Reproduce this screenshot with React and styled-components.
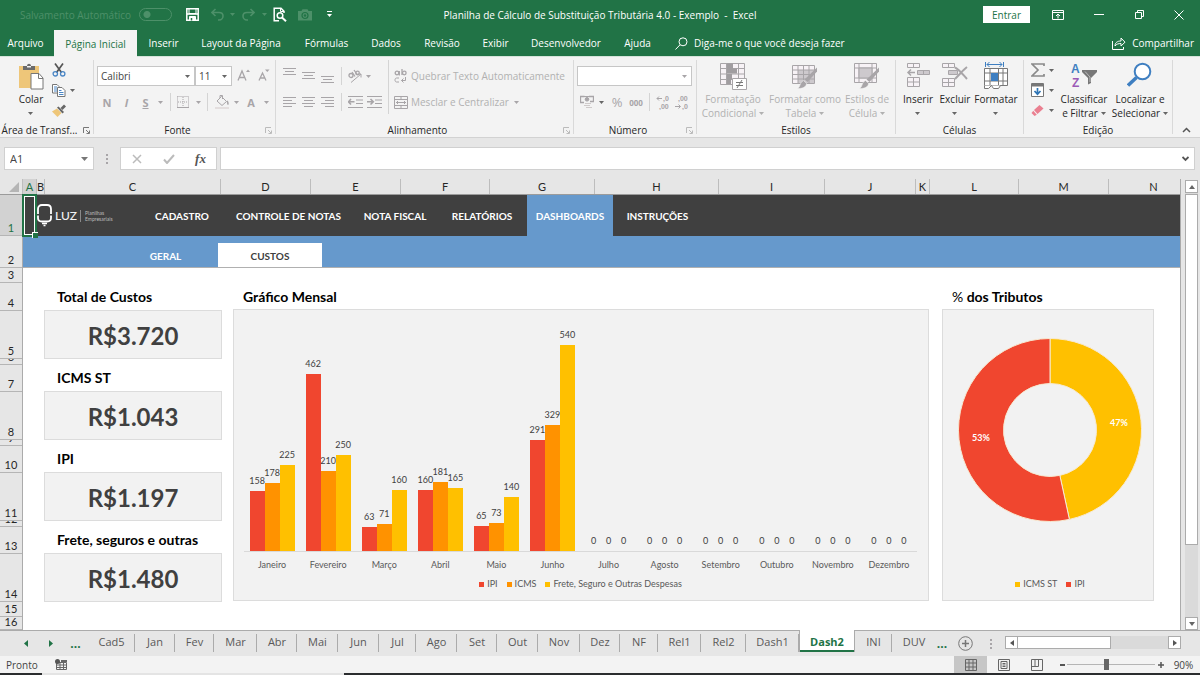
import { useState } from "react";
import styled, { createGlobalStyle, css } from "styled-components";

const GlobalStyle = createGlobalStyle`
  * {
    box-sizing: border-box;
  }
  body {
    margin: 0;
    background: #e6e6e6;
    font-family: "Open Sans", "Noto Sans", sans-serif;
    font-size: 10px;
    color: #262626;
  }
  button, input, select {
    font: inherit;
    color: inherit;
    margin: 0;
    padding: 0;
    border: 0;
    background: none;
    outline: none;
  }
  svg {
    display: block;
    flex: none;
  }
`;

const GREEN = "#217346";
const GRAY = "#a8a5a8";
const DARK = "#666";
const RED = "#f0462f";
const ORANGE = "#ff9200";
const YELLOW = "#ffc000";

const Window = styled.div`
  display: flex;
  flex-direction: column;
  min-height: 100vh;
`;

/* ---------- title bar ---------- */

const TitleBar = styled.header`
  display: grid;
  grid-template-columns: 1fr auto 1fr;
  align-items: center;
  height: 29px;
  background: ${GREEN};
  color: white;
`;

const QuickAccess = styled.div`
  display: flex;
  align-items: center;
  padding-left: 20px;
`;

const AutoSave = styled.label`
  display: flex;
  align-items: center;
  justify-content: space-between;
  width: 152px;
  margin-right: 8px;
  color: #4d9069;
  white-space: nowrap;
  >input {
    appearance: none;
    width: 33px;
    height: 13px;
    border: 1px solid #4d9069;
    border-radius: 7px;
    background: radial-gradient(circle at 7px 50%, #4d9069 3px, transparent 4px);
  }
`;

const Title = styled.div`
  font-size: 10px;
  white-space: pre;
`;

const WindowButtons = styled.div`
  display: flex;
  align-items: center;
  justify-content: flex-end;
  padding-right: 1px;
`;

const SignIn = styled.button`
  width: 47px;
  height: 17px;
  margin-right: 8px;
  background: white;
  color: ${GREEN};
`;

const Tool = styled.button`
  display: flex;
  flex: none;
  align-items: center;
  justify-content: center;
  width: ${(props) => props.$w || 19}px;
  height: 20px;
  color: ${(props) => props.$color || GRAY};
  >b {
    font-size: 11px;
  }
`;

/* ---------- ribbon tabs ---------- */

const TabRow = styled.nav`
  display: flex;
  height: 28px;
  padding-top: 1px;
  background: ${GREEN};
  border-bottom: 1px solid #d5e3da;
  color: white;
`;

const RibbonTab = styled.button`
  width: ${(props) => props.$w}px;
  white-space: nowrap;
  &:first-child {
    padding-right: 3px;
  }
  ${(props) => props.$active && css`
    background: #f3f3f3;
    color: ${GREEN};
    margin-bottom: -1px;
  `}
`;

const TabAction = styled.button`
  display: flex;
  align-items: center;
  gap: 6px;
  padding: 0 6px 0 14px;
  &:last-child {
    margin-left: auto;
  }
`;

/* ---------- ribbon ---------- */

const Ribbon = styled.div`
  display: flex;
  height: 81px;
  background: #f3f3f3;
  border-bottom: 1px solid #d2d2d2;
`;

const GroupBox = styled.section`
  display: flex;
  flex: none;
  flex-direction: column;
  width: ${(props) => props.$w}px;
  margin: 3px 0;
  border-right: 1px solid #d9d9d9;
`;

const GroupBody = styled.div`
  display: flex;
  flex: 1;
  padding-left: ${(props) => props.$pad || 0}px;
`;

const GroupFooter = styled.div`
  display: flex;
  align-items: center;
  height: 8px;
  >span {
    flex: 1;
    text-align: center;
    white-space: nowrap;
  }
`;

const ToolRows = styled.div`
  display: flex;
  flex-direction: column;
  gap: 6px;
  padding-top: 6px;
`;

const ToolColumn = styled.div`
  display: flex;
  flex-direction: column;
`;

const ToolRow = styled.div`
  display: flex;
  align-items: center;
  height: 20px;
  padding-left: ${(props) => props.$pad || 0}px;
`;

const Sep = styled.div`
  flex: none;
  width: 1px;
  height: ${(props) => props.$h || 18}px;
  margin: 0 ${(props) => props.$r}px 0 ${(props) => props.$l}px;
  background: #d4d4d4;
`;

const Combo = styled.div`
  position: relative;
  width: ${(props) => props.$w}px;
  >select {
    appearance: none;
    width: 100%;
    height: 20px;
    padding-left: 3px;
    border: 1px solid #c6c6c6;
    background: white;
    color: #444;
  }
  >svg {
    position: absolute;
    right: 5px;
    top: 9px;
    pointer-events: none;
  }
`;

const TextTool = styled.button`
  display: flex;
  align-items: center;
  gap: 3px;
  height: 20px;
  color: #b1b1b1;
  white-space: nowrap;
`;

const Percent = styled.span`
  font-size: 13px;
`;

const Thousands = styled.span`
  font-size: 8px;
  font-weight: 700;
`;

const Big = styled.button`
  display: flex;
  flex: none;
  flex-direction: column;
  align-items: center;
  justify-content: flex-start;
  gap: 2px;
  width: ${(props) => props.$w}px;
  padding-top: 2px;
  color: ${(props) => (props.$off ? "#b1b1b1" : "#262626")};
  line-height: 14px;
  white-space: nowrap;
`;

const BigLine = styled.span`
  display: flex;
  align-items: center;
  justify-content: center;
  gap: 3px;
  height: 14px;
`;

const Collapse = styled.button`
  display: flex;
  flex: 1;
  align-items: flex-end;
  justify-content: center;
  padding-bottom: 4px;
`;

/* ---------- formula bar ---------- */

const FormulaRow = styled.div`
  display: flex;
  height: 41px;
  padding: 9px 5px 9px 4px;
`;

const Field = styled.div`
  display: flex;
  align-items: center;
  width: ${(props) => props.$w}px;
  border: 1px solid #d0d0d0;
  background: white;
  ${(props) => props.$grow && "flex: 1;"}
  >input {
    flex: 1;
    min-width: 0;
    padding-left: 5px;
    font-size: 11px;
    color: #444;
  }
  >svg {
    margin-right: 5px;
  }
`;

const Dots = styled.div`
  display: flex;
  align-items: center;
  justify-content: center;
  width: ${(props) => props.$w}px;
`;

const Fx = styled.i`
  font-family: "Liberation Serif", serif;
  font-size: 13px;
  font-weight: 700;
`;

/* ---------- sheet ---------- */

const SheetArea = styled.div`
  display: flex;
  flex: 1;
`;

const Sheet = styled.div`
  display: flex;
  flex: 1;
  flex-direction: column;
  min-width: 0;
  border-right: 1px solid #ababab;
`;

const ColumnHeads = styled.div`
  display: flex;
  height: 16px;
  overflow: hidden;
  border-bottom: 1px solid #9b9b9b;
  font-family: Lato, sans-serif;
  font-size: 11px;
`;

const ColumnHead = styled.div`
  flex: none;
  width: ${(props) => props.$w}px;
  border-right: 1px solid #bdbdbd;
  line-height: 15px;
  text-align: center;
  ${(props) => props.$on && `background: #d2d2d2; color: ${GREEN};`}
`;

const Corner = styled.div`
  display: flex;
  flex: none;
  align-items: flex-end;
  justify-content: flex-end;
  width: 23px;
  padding: 0 3px 2px 0;
  border-right: 1px solid #bdbdbd;
`;

const SheetBody = styled.div`
  display: flex;
  flex: 1;
`;

const RowHeads = styled.div`
  width: 23px;
  border-right: 1px solid #ababab;
  font-family: Lato, sans-serif;
  font-size: 11px;
`;

const RowHead = styled.div`
  display: flex;
  align-items: flex-end;
  justify-content: center;
  height: ${(props) => props.$h}px;
  overflow: hidden;
  border-bottom: 1px solid #b5b5b5;
  line-height: 14px;
  ${(props) => props.$on && `background: #d2d2d2; color: ${GREEN};`}
`;

const Cells = styled.div`
  position: relative;
  flex: 1;
  min-width: 0;
  background: white;
  font-family: Lato, Carlito, sans-serif;
`;

const Selection = styled.div`
  position: absolute;
  left: -1px;
  top: -1px;
  width: 15px;
  height: 43px;
  border: 2px solid ${GREEN};
  box-shadow: inset 0 0 0 1px white;
  &::after {
    content: "";
    position: absolute;
    right: -3px;
    bottom: -3px;
    width: 5px;
    height: 5px;
    border: 1px solid white;
    border-width: 1px 0 0 1px;
    background: ${GREEN};
  }
`;

const MainNav = styled.nav`
  display: flex;
  height: 41px;
  background: #404040;
`;

const NavLink = styled.a`
  display: flex;
  align-items: center;
  justify-content: center;
  width: ${(props) => props.$w}px;
  background: ${(props) => (props.$active ? "#6699cc" : "transparent")};
  color: white;
  font-size: 10px;
  font-weight: 700;
  text-decoration: none;
  white-space: nowrap;
`;

const Logo = styled.div`
  display: flex;
  align-items: center;
  width: 117px;
  padding-left: 14px;
  color: #f2f2f2;
  >b {
    margin-left: 3px;
    font-size: 12px;
    font-weight: 500;
  }
  >small {
    margin-left: 3px;
    padding-left: 4px;
    border-left: 1px solid #8a8a8a;
    font-size: 5px;
    line-height: 6px;
    color: #bdbdbd;
  }
`;

const SubNav = styled.nav`
  display: flex;
  align-items: flex-end;
  height: 32px;
  padding-left: 90px;
  background: #6699cc;
  border-bottom: 1px solid #b0b0b0;
`;

const SubLink = styled.a`
  width: ${(props) => props.$w}px;
  height: 24px;
  background: ${(props) => (props.$active ? "white" : "transparent")};
  color: ${(props) => (props.$active ? "#404040" : "white")};
  font-size: 10px;
  font-weight: 700;
  line-height: 26px;
  text-align: center;
  text-decoration: none;
`;

const Dashboard = styled.main`
  display: flex;
  padding: 15px 26px 28px 21px;
`;

const CardColumn = styled.div`
  display: flex;
  flex-direction: column;
  gap: 5px;
  width: 178px;
  margin-right: 11px;
`;

const Heading = styled.h2`
  height: ${(props) => props.$h || 26}px;
  margin: 0;
  padding-left: ${(props) => props.$pad || 10}px;
  font-size: 14px;
  font-weight: 700;
  line-height: 28px;
  color: black;
  >span {
    font-weight: 400;
  }
`;

const Card = styled.div`
  height: 49px;
  border: 1px solid #dcdcdc;
  background: #f2f2f2;
  color: #404040;
  font-size: 24px;
  font-weight: 700;
  line-height: 49px;
  text-align: center;
`;

const ChartColumn = styled.section`
  display: flex;
  flex-direction: column;
  min-width: 0;
  margin-bottom: 1px;
  ${(props) => (props.$w ? `width: ${props.$w}px;` : "flex: 1; margin-right: 13px;")}
`;

const Panel = styled.div`
  display: flex;
  flex: 1;
  flex-direction: column;
  padding: ${(props) => props.$top || 0}px 11px 9px ${(props) => props.$left || 10}px;
  border: 1px solid #dcdcdc;
  background: #f2f2f2;
  color: #595959;
  font-size: 9px;
`;

const Plot = styled.div`
  display: grid;
  grid-template-columns: repeat(12, 1fr);
  flex: 1;
  align-items: end;
  border-bottom: 1px solid #d9d9d9;
`;

const Month = styled.div`
  display: flex;
  align-items: flex-end;
  justify-content: center;
`;

const BarSlot = styled.div`
  display: flex;
  flex-direction: column;
  align-items: center;
  width: 15px;
  color: #404040;
  line-height: 12px;
`;

const Bar = styled.div`
  width: 100%;
  margin-top: 4px;
  background: ${(props) => props.$color};
`;

const MonthNames = styled.div`
  display: grid;
  grid-template-columns: repeat(12, 1fr);
  line-height: 25px;
  text-align: center;
`;

const LegendRow = styled.div`
  display: flex;
  justify-content: center;
  gap: 9px;
  margin-top: ${(props) => props.$top || "0"};
  line-height: 14px;
`;

const LegendItem = styled.span`
  display: flex;
  align-items: center;
  gap: 3px;
  &::before {
    content: "";
    width: 5px;
    height: 5px;
    background: ${(props) => props.$color};
  }
`;

const DonutBox = styled.div`
  display: flex;
  justify-content: center;
  >svg {
    font-size: 9px;
    font-weight: 700;
  }
`;

/* ---------- scrollbars, sheet tabs, status ---------- */

const VScroll = styled.div`
  display: flex;
  flex-direction: column;
  width: 13px;
  margin: 1px 2px 0 4px;
  background: #dadada;
`;

const ScrollButton = styled.button`
  display: flex;
  flex: none;
  align-items: center;
  justify-content: center;
  width: 13px;
  height: 13px;
  border: 1px solid #ababab;
  background: white;
`;

const VThumb = styled.div`
  flex: 1;
  margin: 1px 0 72px;
  border: 1px solid #ababab;
  background: white;
`;

const SheetTabs = styled.div`
  display: flex;
  height: 26px;
  border-top: 1px solid #ababab;
`;

const TabArrow = styled.button`
  display: flex;
  align-items: center;
  justify-content: center;
  width: ${(props) => props.$w || 25}px;
  color: ${GREEN};
  font-size: 12px;
  font-weight: 700;
`;

const SheetTab = styled.button`
  position: relative;
  flex: none;
  width: ${(props) => props.$w}px;
  padding-bottom: 4px;
  font-size: 11px;
  color: #595959;
  &::after {
    content: "";
    position: absolute;
    right: 0;
    top: 3px;
    height: 18px;
    border-right: 1px solid #ababab;
  }
  ${(props) => props.$last && css`
    &::after {
      display: none;
    }
  `}
  ${(props) => props.$active && css`
    height: 22px;
    margin-top: -1px;
    padding: 0;
    background: white;
    border: solid #ababab;
    border-width: 0 1px;
    box-shadow: inset 0 -2px ${GREEN};
    color: ${GREEN};
    font-weight: 700;
    &::after {
      display: none;
    }
  `}
`;

const HScroll = styled.div`
  display: flex;
  flex: 1;
  height: 13px;
  margin: 5px 19px 0 5px;
  background: #dadada;
`;

const HThumb = styled.div`
  flex: 1;
  margin-right: 57px;
  border: 1px solid #ababab;
  border-left: 0;
  background: white;
`;

const StatusBar = styled.footer`
  display: flex;
  align-items: center;
  height: 17px;
  padding-left: 6px;
  background: #f3f3f3;
  color: #444;
  >span {
    width: 49px;
  }
`;

const Spacer = styled.div`
  flex: 1;
`;

const ViewButton = styled.button`
  display: flex;
  align-items: center;
  justify-content: center;
  width: 33px;
  height: 17px;
  background: ${(props) => (props.$active ? "#c6c6c6" : "transparent")};
`;

const ZoomBox = styled.div`
  display: flex;
  align-items: center;
  margin-left: 4px;
  >input {
    appearance: none;
    width: 88px;
    height: 12px;
    background: linear-gradient(#b5b5b5, #b5b5b5) center / 100% 1px no-repeat;
  }
  >input::-webkit-slider-thumb {
    appearance: none;
    width: 5px;
    height: 11px;
    background: #666;
  }
  >output {
    width: 33px;
    text-align: center;
  }
`;

const BottomEdge = styled.div`
  display: flex;
  height: 2px;
  background: #2b2d2f;
  &::before {
    content: "";
    width: 302px;
    margin-left: 42px;
    background: #e4e4e4;
  }
`;

/* ---------- icons ---------- */

const Caret = ({ color = DARK }) => (
  <svg width="5" height="3" viewBox="0 0 5 3"><path d="M0 0h5L2.5 3z" fill={color} /></svg>
);

const Svg = ({ w = 14, h = 14, color = GRAY, children }) => (
  <svg width={w} height={h} viewBox={`0 0 ${w} ${h}`} fill="none" stroke={color}>{children}</svg>
);

const Lines = ({ rows, h = 14 }) => (
  <svg width="13" height={h} viewBox={`0 0 13 ${h}`} fill={GRAY}>
    {rows.map(([x, y, w]) => <rect key={y} x={x} y={y} width={w} height="1" />)}
  </svg>
);

const Launcher = ({ color = "#777" }) => (
  <Tool $w={14} aria-label="Mais opções">
    <Svg w={7} h={7} color={color}><path d="M.5 6V.5H6M3 3l3 3M6.5 3.5v3h-3" /></Svg>
  </Tool>
);

const SaveIcon = () => (
  <Svg w={13} h={13} color="white">
    <path d="M.8.8h11.4v11.4H.8z" strokeWidth="1.5" />
    <path d="M3 1h7v4.5H3z" fill={GREEN} />
    <path d="M1 6h11" strokeWidth="1.6" />
    <path d="M3.5 8.5h6v4h-6z" fill="white" /><path d="M5.5 10v2.5" stroke={GREEN} strokeWidth="1.5" />
  </Svg>
);

const UndoIcon = ({ flip }) => (
  <svg width="13" height="13" viewBox="0 0 13 13" fill="none" stroke="#4d9069" strokeWidth="1.6">
    <path transform={flip ? "translate(13 0) scale(-1 1)" : undefined} d="M4.5 1L1 4.5 4.500 8M1.500 4.500H8c2.500 0 4 1.500 4 3.500s-1.500 4-4 4H7" />
  </svg>
);

const PreviewIcon = () => (
  <Svg w={14} h={15} color="white">
    <path d="M6 13.800H1.200V1.200H8l3 3V6" strokeWidth="1.500" /><path d="M7.500 1v3.500H11" />
    <circle cx="7" cy="8.500" r="2.800" strokeWidth="1.500" /><path d="M9 10.500l4 3.700" strokeWidth="2" />
  </Svg>
);

const CameraIcon = () => (
  <Svg w={14} h={12} color="none">
    <path d="M0 2h3.500l1-1.800h5l1 1.800H14v9.500H0z" fill="#4d9069" />
    <circle cx="7" cy="6.500" r="3" stroke={GREEN} strokeWidth="1.200" /><circle cx="7" cy="6.500" r="1.200" fill={GREEN} />
  </Svg>
);

const PasteIcon = () => (
  <svg width="26" height="28" viewBox="0 0 26 28">
    <path d="M1 4h20v22H1z" fill="#eec679" />
    <path d="M5 8V4h4c0-3 4-3 4 0h4v4z" fill="#6b6b6b" /><path d="M9 4h4v1.500H9z" fill="#f3f3f3" />
    <path d="M13 11.500h8l4 4.500v11H13z" fill="white" stroke="#777" /><path d="M20.500 11.500v5H25" fill="none" stroke="#777" />
  </svg>
);

const CutIcon = () => (
  <Svg w={14} h={14} color="#555">
    <path d="M3 .5l6.500 9M11 .5L4.500 9.500" strokeWidth="1.700" />
    <circle cx="3.300" cy="10.800" r="2.200" stroke="#4a86c5" strokeWidth="1.300" /><circle cx="10.700" cy="10.800" r="2.200" stroke="#4a86c5" strokeWidth="1.300" />
  </Svg>
);

const CopyIcon = () => (
  <Svg w={14} h={13} color="#777">
    <path d="M.5.5H5l2 2V9H.5z" fill="white" /><path d="M2 3h3M2 5h3M2 7h3" stroke="#4a86c5" />
    <path d="M5.500 3.500H10l3 3v6H5.500z" fill="white" /><path d="M7 6.500h2.500M7 8.500h4.500M7 10.500h4.500" stroke="#4a86c5" />
  </Svg>
);

const PainterIcon = () => (
  <Svg w={14} h={13} color="none">
    <path d="M0 7.500l5-3 4.500 4.500-4 4z" fill="#eec679" />
    <path d="M5 3.500l1.500-1 5.500 5.500-1.500 1.500z" fill="#666" /><path d="M8.500 4L12 .5l2 2L10.500 6z" fill="#666" />
  </Svg>
);

const BordersIcon = () => (
  <Svg w={12} h={12}>
    <path d="M.5.5h11v11M.5.5v11M6 1v10M1 6h10" strokeDasharray="1 1" /><path d="M0 11.500h12" />
  </Svg>
);

const FillIcon = () => (
  <Svg w={14} h={14}>
    <path d="M6.500 1.500l5 5-4.500 4L2 6z" /><path d="M5 3V.5h2.500V4" /><path d="M12 6c1 1.500 1.500 2.500.5 3.500" strokeWidth="1.500" />
    <path d="M0 12h14v2H0z" fill="#e3dede" stroke="none" />
  </Svg>
);

const OrientationIcon = () => (
  <svg width="15" height="15" viewBox="0 0 15 15" fill="none" stroke={GRAY}>
    <circle cx="3" cy="6.500" r="2" strokeWidth="1.300" /><path d="M4 3l3 4.500M6 1l3.500 5" strokeWidth="1.300" /><circle cx="9.500" cy="4" r="1.800" strokeWidth="1.300" />
    <path d="M3 13.500L13 5M13 8.500V5H9.500" />
  </svg>
);

const IndentIcon = ({ right }) => (
  <Svg w={15} h={12}>
    <path d="M0 .5h15M8 4h7M8 7.500h7M0 11.500h15" />
    <path d={right ? "M0 5.800h6M3.500 3L6.300 5.800 3.500 8.500" : "M6.500 5.800h-6M3 3L.5 5.800 3 8.500"} strokeWidth="1.600" />
  </Svg>
);

const WrapIcon = () => (
  <Svg w={14} h={14}>
    <circle cx="3" cy="4" r="1.800" strokeWidth="1.300" /><path d="M5.300 2v4.500M8 0v6" strokeWidth="1.300" /><circle cx="10.300" cy="4" r="1.800" strokeWidth="1.300" />
    <path d="M5 9H2.500c-2 0-2 4 0 4H5M11.500 8v3.500H7.500M9.500 9.500l-2 2 2 2" />
  </Svg>
);

const MergeIcon = () => (
  <Svg w={14} h={13}>
    <path d="M.5.5h13v12H.5zM.5 3.500h13M.5 9.500h13M7 .5v3M7 9.500v3M2 6.500h10M4 5L2.500 6.500 4 8M10 5l1.500 1.500L10 8" />
  </Svg>
);

const MoneyIcon = () => (
  <Svg w={14} h={14}>
    <path d="M4 7.500H.5v-6h4M9 1.500h4.500v5H10" strokeWidth="1.300" /><path d="M3 1.500h8" /><circle cx="7" cy="4.300" r="1.800" fill={GRAY} />
    <path d="M5 8.500h6M4 10.500h6M6 12.500h6" stroke="#cfcaca" />
  </Svg>
);

const DecimalIcon = ({ less }) => (
  <svg width="14" height="15" viewBox="0 0 14 15" fill={GRAY} fontFamily="Liberation Sans, sans-serif" fontSize="7" fontWeight="700">
    <text x={less ? 3 : 7} y="6">{less ? ",00" : ",0"}</text>
    <text x={less ? 7 : 3} y="14">{less ? ",0" : ",00"}</text>
    <path d={less ? "M0 11.500h5M3.500 9.500l2 2-2 2" : "M6 3.500H1M3 1.500l-2 2 2 2"} fill="none" stroke={GRAY} />
  </svg>
);

const Brush = () => (
  <g stroke="none" fill={GRAY}>
    <path d="M26 5.500v4L16.500 20l-3-2.500z" />
    <path d="M12.500 18.500l3 2.800c0 3.500-3.500 5.500-9 5.200 3-1.500 2-6 6-8z" stroke="#f3f3f3" strokeWidth=".6" />
  </g>
);

const CondIcon = () => (
  <Svg w={28} h={28}>
    <path d="M1.500 1.500h24v21h-24zM1.500 6.500h24M1.500 12h24M1.500 17.500h24M7.500 1.500v21M19.500 1.500v21" fill="#f7f2f6" />
    <path d="M8 1.500h6v5H8zM8 6.500h10v5H8zM8 12h5v5H8zM8 17h4v5H8z" fill="#a09da0" stroke="none" />
    <path d="M13.500 16.500h14v11h-14z" fill="white" /><path d="M17 20.500h7M17 23.500h7M23 18l-5 8" stroke="#777" />
  </Svg>
);

const TableIcon = () => (
  <Svg w={28} h={28}>
    <path d="M1.500 3.500h22v18h-22z" fill="#f7f2f6" /><path d="M7 8h16v13H7z" fill="#cdc9cd" stroke="none" />
    <path d="M1.500 8h22M1.500 12.500h22M1.500 17h22M7 3.500v18M12.500 3.500v18M18 3.500v18" /><Brush />
  </Svg>
);

const StylesIcon = () => (
  <Svg w={28} h={28}>
    <path d="M1.500 1.500h22v19h-22zM1.500 6h22M1.500 16h22M6 1.500v19M19 1.500v19" fill="#f7f2f6" />
    <path d="M6 6h13v10H6z" fill="#cdc9cd" /><Brush />
  </Svg>
);

const InsertIcon = () => (
  <Svg w={26} h={28}>
    <path d="M2.500 1.500h12v4h-12zM8.500 1.500v4M2.500 15.500h12v9h-12zM2.500 20h12M8.500 15.500v9" fill="#f7f2f6" />
    <path d="M12.500 8.500h12v4h-12zM18.500 8.500v4" fill="#cdc9cd" /><path d="M10 10.500H3M6 7.500l-3 3 3 3" strokeWidth="1.500" />
  </Svg>
);

const DeleteIcon = () => (
  <Svg w={28} h={28}>
    <path d="M1.500 1.500h12v4h-12zM7.500 1.500v4M1.500 16.500h12v8h-12zM1.500 20.500h12M7.500 16.500v8" fill="#f7f2f6" />
    <path d="M7.500 8.500h9v4h-9z" fill="#cdc9cd" /><path d="M14 5.500c4 2 7 6 12 11.500M26 5c-4 3-7 7-12 12" strokeWidth="2" />
  </Svg>
);

const FormatIcon = () => (
  <Svg w={26} h={28} color="#777">
    <path d="M2.500 0v5M20.500 0v5M4 2.500h15M6.500 0L4 2.500 6.500 5M16.500 0L19 2.500 16.500 5" stroke="#3f7fc1" />
    <path d="M1.500 6.500h23v17h-23zM1.500 11h23M1.500 19h23M7 6.500v17M15.500 6.500v17M20 6.500v17" fill="white" />
    <path d="M8 11h7v8H8z" fill="#3f7fc1" stroke="none" />
    <path d="M1.500 23.500v3h4l3-3 2 3h5l2-3" fill="white" />
  </Svg>
);

const SigmaIcon = () => (
  <Svg w={14} h={14} color="#8a8a8a"><path d="M13 3V1H1l6 6-6 6h12v-2" strokeWidth="1.700" /></Svg>
);

const FillDownIcon = () => (
  <Svg w={13} h={14} color="#777">
    <path d="M.5.5h12v13H.5z" fill="white" /><path d="M1 2h11" strokeWidth="3" />
    <path d="M6.500 5v6M3.500 8l3 3.200 3-3.200" stroke="#2f75b5" strokeWidth="1.700" />
  </Svg>
);

const EraserIcon = () => (
  <Svg w={13} h={13} color="none">
    <path d="M8.500 1L12.500 4.500 6.500 10 3 6z" fill="#ea7f90" /><path d="M2.300 6.700l3.500 4L3.500 12 .5 9z" fill="#ea7f90" />
  </Svg>
);

const SortIcon = () => (
  <svg width="28" height="28" viewBox="0 0 28 28" fontFamily="Liberation Sans, sans-serif" fontSize="12" fontWeight="700">
    <text x="1" y="11" fill="#3f7fc1">A</text>
    <text x="2" y="25" fill="#9b59b6">Z</text>
    <path d="M12 8h15v2l-6 6v5l-3 1.500V16l-6-6z" fill="#777" /><path d="M15 9.500l5 5.500v5" fill="none" stroke="#bbb" />
  </svg>
);

const FindIcon = () => (
  <Svg w={26} h={28} color="#3f7fc1">
    <circle cx="15.500" cy="9.500" r="7.800" fill="white" strokeWidth="2" /><path d="M9.500 15.500L1 23.500" strokeWidth="3.500" />
  </Svg>
);

const BulbIcon = () => (
  <Svg w={15} h={23} color="white">
    <path d="M1 10V5c0-2.500 1.500-4 4-4h5c2.500 0 4 1.500 4 4v5M1 11.500V14c0 2 1.500 3.500 4 3.500h5c2.500 0 4-1.500 4-3.500v-2.500" strokeWidth="1.800" />
    <path d="M5 19.500h5M6.500 21.500h2" strokeWidth="1.500" />
  </Svg>
);

/* ---------- data ---------- */

const ribbonTabs = [
  ["Arquivo", 54], ["Página Inicial", 83], ["Inserir", 53], ["Layout da Página", 102],
  ["Fórmulas", 69], ["Dados", 50], ["Revisão", 62], ["Exibir", 45],
  ["Desenvolvedor", 96], ["Ajuda", 47],
];

const columns = [
  ["A", 14], ["B", 8], ["C", 176], ["D", 90], ["E", 90], ["F", 89], ["G", 105], ["H", 124],
  ["I", 106], ["J", 91], ["K", 14], ["L", 89], ["M", 90], ["N", 90],
];

const rowHeights = [41, 32, 15, 28, 48, 6, 27, 48, 6, 27, 48, 6, 27, 48, 15, 13];

const navItems = [
  ["CADASTRO", 84], ["CONTROLE DE NOTAS", 129], ["NOTA FISCAL", 84],
  ["RELATÓRIOS", 90], ["DASHBOARDS", 86], ["INSTRUÇÕES", 89],
];

const cards = [
  ["Total de Custos", "R$3.720"],
  ["ICMS ST", "R$1.043"],
  ["IPI", "R$1.197"],
  ["Frete, seguros e outras", "R$1.480"],
];

const months = [
  ["Janeiro", [158, 178, 225]],
  ["Fevereiro", [462, 210, 250]],
  ["Março", [63, 71, 160]],
  ["Abril", [160, 181, 165]],
  ["Maio", [65, 73, 140]],
  ["Junho", [291, 329, 540]],
  ["Julho", [0, 0, 0]],
  ["Agosto", [0, 0, 0]],
  ["Setembro", [0, 0, 0]],
  ["Outubro", [0, 0, 0]],
  ["Novembro", [0, 0, 0]],
  ["Dezembro", [0, 0, 0]],
];

const series = [["IPI", RED], ["ICMS", ORANGE], ["Frete, Seguro e Outras Despesas", YELLOW]];

const sheetTabs = [
  ["Cad5", 47], ["Jan", 40], ["Fev", 39], ["Mar", 43], ["Abr", 40], ["Mai", 41], ["Jun", 41],
  ["Jul", 37], ["Ago", 41], ["Set", 40], ["Out", 41], ["Nov", 42], ["Dez", 40], ["NF", 38],
  ["Rel1", 43], ["Rel2", 45], ["Dash1", 53], ["Dash2", 56], ["INI", 37], ["DUV", 44],
];

/* ---------- parts ---------- */

const Group = ({ w, pad, label, launcher, children }) => (
  <GroupBox $w={w}>
    <GroupBody $pad={pad}>{children}</GroupBody>
    <GroupFooter>
      <span>{label}</span>
      {launcher && <Launcher color={launcher} />}
    </GroupFooter>
  </GroupBox>
);

const BigButton = ({ w, icon, lines, off }) => (
  <Big $w={w} $off={off}>
    {icon}
    <span>
      <BigLine>{lines[0]}</BigLine>
      <BigLine>{lines[1]}<Caret color={off ? "#b1b1b1" : DARK} /></BigLine>
    </span>
  </Big>
);

const RibbonBar = () => (
  <Ribbon>
    <Group w={94} pad={12} label="Área de Transf..." launcher="#777">
      <BigButton w={38} icon={<PasteIcon />} lines={["Colar", ""]} />
      <ToolColumn>
        <Tool $w={18} aria-label="Recortar"><CutIcon /></Tool>
        <ToolRow>
          <Tool $w={18} aria-label="Copiar"><CopyIcon /></Tool>
          <Tool $w={9} aria-label="Opções de cópia"><Caret /></Tool>
        </ToolRow>
        <Tool $w={18} aria-label="Pincel"><PainterIcon /></Tool>
      </ToolColumn>
    </Group>

    <Group w={182} pad={3} label="Fonte" launcher="#bbb">
      <ToolRows>
        <ToolRow>
          <Combo $w={98}>
            <select aria-label="Fonte"><option>Calibri</option></select>
            <Caret />
          </Combo>
          <Combo $w={37}>
            <select aria-label="Tamanho"><option>11</option></select>
            <Caret />
          </Combo>
          <Tool $w={22} aria-label="Aumentar fonte">
            <Svg w={13} h={14}><path d="M1 11.500L5 2l4 9.500M2.500 8.500h5" strokeWidth="1.300" /><path d="M9 3l2-2.500L13 3z" fill={GRAY} stroke="none" /></Svg>
          </Tool>
          <Tool $w={20} aria-label="Diminuir fonte">
            <Svg w={12} h={14}><path d="M1 11.500L4.500 4 8 11.500M2 9h5" strokeWidth="1.300" /><path d="M7 .5h4.500L9.300 3z" fill={GRAY} stroke="none" /></Svg>
          </Tool>
        </ToolRow>
        <ToolRow>
          <Tool $w={20} aria-label="Negrito"><b>N</b></Tool>
          <Tool aria-label="Itálico"><b><i>I</i></b></Tool>
          <Tool aria-label="Sublinhado"><b><u>S</u></b></Tool>
          <Tool $w={10} aria-label="Opções de sublinhado"><Caret color={GRAY} /></Tool>
          <Sep $l={5} $r={5} />
          <Tool $w={14} aria-label="Bordas"><BordersIcon /></Tool>
          <Tool $w={16} aria-label="Opções de bordas"><Caret color={GRAY} /></Tool>
          <Sep $l={1} $r={6} />
          <Tool $w={15} aria-label="Cor de preenchimento"><FillIcon /></Tool>
          <Tool $w={14} aria-label="Opções de preenchimento"><Caret color={GRAY} /></Tool>
          <Tool $w={16} aria-label="Cor da fonte"><b>A</b></Tool>
          <Tool $w={14} aria-label="Opções de cor"><Caret color={GRAY} /></Tool>
        </ToolRow>
      </ToolRows>
    </Group>

    <Group w={298} pad={4} label="Alinhamento" launcher="#bbb">
      <ToolRows>
        <ToolRow>
          <Tool aria-label="Alinhar em cima"><Lines h={16} rows={[[0, 0, 13], [2, 3, 9], [0, 6, 13]]} /></Tool>
          <Tool aria-label="Alinhar no meio"><Lines h={16} rows={[[0, 4, 13], [2, 7, 9], [0, 10, 13]]} /></Tool>
          <Tool aria-label="Alinhar embaixo"><Lines h={16} rows={[[0, 8, 13], [2, 11, 9], [0, 14, 13]]} /></Tool>
          <Sep $l={4} $r={5} />
          <Tool $w={16} aria-label="Orientação"><OrientationIcon /></Tool>
          <Tool $w={10} aria-label="Opções de orientação"><Caret color={GRAY} /></Tool>
        </ToolRow>
        <ToolRow>
          <Tool aria-label="Alinhar à esquerda"><Lines h={12} rows={[[0, 1, 13], [0, 4, 9], [0, 7, 13], [0, 10, 9]]} /></Tool>
          <Tool aria-label="Centralizar"><Lines h={12} rows={[[0, 1, 13], [2, 4, 9], [0, 7, 13], [2, 10, 9]]} /></Tool>
          <Tool aria-label="Alinhar à direita"><Lines h={12} rows={[[0, 1, 13], [4, 4, 9], [0, 7, 13], [4, 10, 9]]} /></Tool>
          <Sep $l={4} $r={4} />
          <Tool aria-label="Diminuir recuo"><IndentIcon /></Tool>
          <Tool aria-label="Aumentar recuo"><IndentIcon right /></Tool>
        </ToolRow>
      </ToolRows>
      <Sep $h={54} $l={4} $r={5} />
      <ToolRows>
        <TextTool><WrapIcon />Quebrar Texto Automaticamente</TextTool>
        <TextTool><MergeIcon />Mesclar e Centralizar&nbsp; <Caret color={GRAY} /></TextTool>
      </ToolRows>
    </Group>

    <Group w={123} pad={3} label="Número" launcher="#bbb">
      <ToolRows>
        <Combo $w={115}>
          <select aria-label="Formato de número"><option></option></select>
          <Caret color={GRAY} />
        </Combo>
        <ToolRow $pad={2}>
          <Tool $w={16} aria-label="Formato contábil"><MoneyIcon /></Tool>
          <Tool $w={12} aria-label="Opções de moeda"><Caret /></Tool>
          <Tool $w={20} aria-label="Porcentagem"><Percent>%</Percent></Tool>
          <Tool $w={18} aria-label="Separador de milhares"><Thousands>000</Thousands></Tool>
          <Sep $l={4} $r={5} />
          <Tool $w={16} aria-label="Aumentar casas decimais"><DecimalIcon /></Tool>
          <Tool $w={22} aria-label="Diminuir casas decimais"><DecimalIcon less /></Tool>
        </ToolRow>
      </ToolRows>
    </Group>

    <Group w={199} label="Estilos">
      <BigButton off w={72} icon={<CondIcon />} lines={["Formatação", "Condicional"]} />
      <BigButton off w={72} icon={<TableIcon />} lines={["Formatar como", "Tabela"]} />
      <BigButton off w={52} icon={<StylesIcon />} lines={["Estilos de", "Célula"]} />
    </Group>

    <Group w={128} pad={3} label="Células">
      <BigButton w={38} icon={<InsertIcon />} lines={["Inserir", ""]} />
      <BigButton w={36} icon={<DeleteIcon />} lines={["Excluir", ""]} />
      <BigButton w={46} icon={<FormatIcon />} lines={["Formatar", ""]} />
    </Group>

    <Group w={149} pad={4} label="Edição">
      <ToolColumn>
        {[["Soma", <SigmaIcon />], ["Preencher", <FillDownIcon />], ["Limpar", <EraserIcon />]].map(([name, icon]) => (
          <ToolRow key={name}>
            <Tool aria-label={name}>{icon}</Tool>
            <Tool $w={8} aria-label={`Opções de ${name}`}><Caret /></Tool>
          </ToolRow>
        ))}
      </ToolColumn>
      <BigButton w={58} icon={<SortIcon />} lines={["Classificar", "e Filtrar"]} />
      <BigButton w={54} icon={<FindIcon />} lines={["Localizar e", "Selecionar"]} />
    </Group>

    <Collapse aria-label="Recolher a faixa">
      <Svg w={9} h={6} color="#555"><path d="M1 5l3.500-3.500L8 5" strokeWidth="1.500" /></Svg>
    </Collapse>
  </Ribbon>
);

const MonthlyChart = () => (
  <Panel>
    <Plot>
      {months.map(([name, values]) => (
        <Month key={name}>
          {values.map((value, i) => (
            <BarSlot key={series[i][0]}>
              {value}
              <Bar $color={series[i][1]} style={{ height: Math.round(value * 0.3824) }} />
            </BarSlot>
          ))}
        </Month>
      ))}
    </Plot>
    <MonthNames>
      {months.map(([name]) => <span key={name}>{name}</span>)}
    </MonthNames>
    <LegendRow>
      {series.map(([name, color]) => <LegendItem key={name} $color={color}>{name}</LegendItem>)}
    </LegendRow>
  </Panel>
);

const Donut = () => {
  const angle = 0.466 * 2 * Math.PI;
  const point = (r) => `${92 + r * Math.sin(angle)} ${92 - r * Math.cos(angle)}`;
  return (
    <DonutBox>
      <svg width="184" height="184" viewBox="0 0 184 184" stroke="#f7ead2">
        <path fill={YELLOW} d={`M92 .5A91.5 91.5 0 0 1 ${point(91.5)}L${point(46.5)}A46.5 46.5 0 0 0 92 45.5z`} />
        <path fill={RED} d={`M92 .5A91.5 91.5 0 1 0 ${point(91.5)}L${point(46.5)}A46.5 46.5 0 1 1 92 45.5z`} />
        <g fill="white" stroke="none" textAnchor="middle">
          <text x="161" y="88">47%</text>
          <text x="23" y="103">53%</text>
        </g>
      </svg>
    </DonutBox>
  );
};

const App = () => {
  const [sheet, setSheet] = useState("Dash2");
  const [zoom, setZoom] = useState(90);

  return (
    <Window>
      <GlobalStyle />
      <TitleBar>
        <QuickAccess>
          <AutoSave>Salvamento Automático<input type="checkbox" /></AutoSave>
          <Tool $w={25} aria-label="Salvar"><SaveIcon /></Tool>
          <Tool $w={25} aria-label="Desfazer"><UndoIcon /></Tool>
          <Tool $w={5} aria-label="Opções de desfazer"><Caret color="#4d9069" /></Tool>
          <Tool $w={27} aria-label="Refazer"><UndoIcon flip /></Tool>
          <Tool $w={5} aria-label="Opções de refazer"><Caret color="#4d9069" /></Tool>
          <Tool $w={25} aria-label="Visualizar"><PreviewIcon /></Tool>
          <Tool $w={25} aria-label="Câmera"><CameraIcon /></Tool>
          <Tool $w={25} aria-label="Personalizar">
            <Svg w={7} h={7} color="white"><path d="M1 .5h5" /><path d="M1 3h5L3.500 6z" fill="white" stroke="none" /></Svg>
          </Tool>
        </QuickAccess>
        <Title>Planilha de Cálculo de Substituição Tributária 4.0 - Exemplo  -  Excel</Title>
        <WindowButtons>
          <SignIn>Entrar</SignIn>
          <Tool $w={40} aria-label="Opções da faixa">
            <Svg w={12} h={10} color="white"><path d="M.5.5h11v9H.5zM.5 2.500h11M6 8.500V4M4 6l2-2 2 2" /></Svg>
          </Tool>
          <Tool $w={41} aria-label="Minimizar"><Svg w={10} h={1} color="white"><path d="M0 .5h10" /></Svg></Tool>
          <Tool $w={40} aria-label="Restaurar">
            <Svg w={9} h={9} color="white"><path d="M.5 2.500h6v6h-6zM2.500 2.500v-2h6v6h-2" /></Svg>
          </Tool>
          <Tool $w={40} aria-label="Fechar"><Svg w={10} h={10} color="white"><path d="M.5.5l9 9M9.500.5l-9 9" /></Svg></Tool>
        </WindowButtons>
      </TitleBar>

      <TabRow>
        {ribbonTabs.map(([name, w]) => (
          <RibbonTab key={name} $w={w} $active={name === "Página Inicial"}>{name}</RibbonTab>
        ))}
        <TabAction>
          <Svg w={13} h={13} color="white"><circle cx="8" cy="4.800" r="4" /><path d="M5 7.800L.5 12.500" /></Svg>
          Diga-me o que você deseja fazer
        </TabAction>
        <TabAction>
          <Svg w={14} h={13} color="white"><path d="M.5 4v8.500h11V10M3 9c0-3.500 2.500-5 6-5V1l4 4.200L9 9V6.500C6.500 6.500 4.500 7 3 9z" /></Svg>
          Compartilhar
        </TabAction>
      </TabRow>

      <RibbonBar />

      <FormulaRow>
        <Field $w={90}>
          <input aria-label="Caixa de nome" defaultValue="A1" />
          <Svg w={7} h={4} color="none"><path d="M0 0h7L3.500 4z" fill="#777" /></Svg>
        </Field>
        <Dots $w={26}><Svg w={2} h={10}><path d="M1 0v10" strokeWidth="2" strokeDasharray="2 2" /></Svg></Dots>
        <Field $w={97}>
          <Tool $w={32} aria-label="Cancelar"><Svg w={10} h={10} color="#bbb"><path d="M1 1l8 8M9 1L1 9" strokeWidth="1.500" /></Svg></Tool>
          <Tool $w={32} aria-label="Inserir valor"><Svg w={12} h={10} color="#bbb"><path d="M1 5.500L4 9l7-8" strokeWidth="2" /></Svg></Tool>
          <Tool $w={31} $color="#555" aria-label="Inserir função"><Fx>fx</Fx></Tool>
        </Field>
        <Dots $w={3} />
        <Field $grow>
          <input aria-label="Barra de fórmulas" />
          <Svg w={7} h={6} color="#555"><path d="M.5 1l3 3 3-3" strokeWidth="1.800" /></Svg>
        </Field>
      </FormulaRow>

      <SheetArea>
        <Sheet>
          <ColumnHeads>
            <Corner><Svg w={10} h={10} color="none"><path d="M10 0v10H0z" fill="#b5b5b5" /></Svg></Corner>
            {columns.map(([name, w]) => <ColumnHead key={name} $w={w} $on={name === "A"}>{name}</ColumnHead>)}
          </ColumnHeads>
          <SheetBody>
            <RowHeads>
              {rowHeights.map((h, i) => <RowHead key={i} $h={h} $on={i === 0}>{i + 1}</RowHead>)}
            </RowHeads>
            <Cells>
              <MainNav>
                <Logo>
                  <BulbIcon />
                  <b>LUZ</b>
                  <small>Planilhas<br />Empresariais</small>
                </Logo>
                {navItems.map(([name, w]) => (
                  <NavLink key={name} href="#" $w={w} $active={name === "DASHBOARDS"}>{name}</NavLink>
                ))}
              </MainNav>
              <SubNav>
                <SubLink href="#" $w={105}>GERAL</SubLink>
                <SubLink href="#" $w={104} $active>CUSTOS</SubLink>
              </SubNav>
              <Selection />
              <Dashboard>
                <CardColumn>
                  {cards.map(([name, value]) => (
                    <section key={name}>
                      <Heading $h={27} $pad={13}>{name}</Heading>
                      <Card>{value}</Card>
                    </section>
                  ))}
                </CardColumn>
                <ChartColumn>
                  <Heading>Gráfico Mensal</Heading>
                  <MonthlyChart />
                </ChartColumn>
                <ChartColumn $w={212}>
                  <Heading><span>%</span> dos Tributos</Heading>
                  <Panel $top={28} $left={15}>
                    <Donut />
                    <LegendRow $top="auto">
                      <LegendItem $color={YELLOW}>ICMS ST</LegendItem>
                      <LegendItem $color={RED}>IPI</LegendItem>
                    </LegendRow>
                  </Panel>
                </ChartColumn>
              </Dashboard>
            </Cells>
          </SheetBody>
        </Sheet>
        <VScroll>
          <ScrollButton aria-label="Rolar para cima"><Svg w={6} h={4} color="none"><path d="M0 4h6L3 0z" fill="#666" /></Svg></ScrollButton>
          <VThumb />
          <ScrollButton aria-label="Rolar para baixo"><Svg w={6} h={4} color="none"><path d="M0 0h6L3 4z" fill="#666" /></Svg></ScrollButton>
        </VScroll>
      </SheetArea>

      <SheetTabs>
        <Dots $w={13} />
        <TabArrow aria-label="Guia anterior"><Svg w={4} h={7} color="none"><path d="M4 0v7L0 3.500z" fill={GREEN} /></Svg></TabArrow>
        <TabArrow aria-label="Próxima guia"><Svg w={4} h={7} color="none"><path d="M0 0v7l4-3.500z" fill={GREEN} /></Svg></TabArrow>
        <TabArrow>...</TabArrow>
        {sheetTabs.map(([name, w]) => (
          <SheetTab
            key={name}
            $w={w}
            $active={name === sheet}
            $last={name === "DUV"}
            onClick={() => setSheet(name)}
          >
            {name}
          </SheetTab>
        ))}
        <TabArrow $w={12}>...</TabArrow>
        <TabArrow $w={34} aria-label="Nova planilha">
          <Svg w={15} h={15} color="#777"><circle cx="7.500" cy="7.500" r="6.800" /><path d="M7.500 4v7M4 7.500h7" strokeWidth="1.500" /></Svg>
        </TabArrow>
        <Dots $w={18}><Svg w={2} h={10}><path d="M1 0v10" strokeWidth="2" strokeDasharray="2 2" /></Svg></Dots>
        <HScroll>
          <ScrollButton aria-label="Rolar para a esquerda"><Svg w={4} h={6} color="none"><path d="M4 0v6L0 3z" fill="#555" /></Svg></ScrollButton>
          <HThumb />
          <ScrollButton aria-label="Rolar para a direita"><Svg w={4} h={6} color="none"><path d="M0 0v6l4-3z" fill="#555" /></Svg></ScrollButton>
        </HScroll>
      </SheetTabs>

      <StatusBar>
        <span>Pronto</span>
        <Svg w={12} h={11} color="#666">
          <path d="M1.500 3.500h10v7h-10zM1.500 6h10M1.500 8.500h10M5 3.500v7M8.500 3.500v7" /><path d="M6 2h6" strokeWidth="2" /><circle cx="2.500" cy="2.500" r="2.500" fill="#555" stroke="none" />
        </Svg>
        <Spacer />
        <ViewButton $active aria-label="Normal">
          <Svg w={12} h={12} color="#666"><path d="M.5.5h11v11H.5zM4 .5v11M8 .5v11M.5 4h11M.5 8h11" /></Svg>
        </ViewButton>
        <ViewButton aria-label="Layout da página">
          <Svg w={12} h={12} color="#666"><path d="M.5.5h11v11H.5zM3 2.500h6v7H3zM4.500 4.500h3M4.500 6h3M4.500 7.500h3" /></Svg>
        </ViewButton>
        <ViewButton aria-label="Quebra de página">
          <Svg w={12} h={12} color="#666"><path d="M.5.5h11v11H.5zM4 .5v7M.5 7.500h7V.5" /></Svg>
        </ViewButton>
        <ZoomBox>
          <Tool $w={10} aria-label="Reduzir"><Svg w={5} h={2} color="#555"><path d="M0 1h5" strokeWidth="2" /></Svg></Tool>
          <input type="range" aria-label="Zoom" min="10" max="190" value={zoom} onChange={(e) => setZoom(+e.target.value)} />
          <Tool $w={12} aria-label="Ampliar"><Svg w={6} h={6} color="#555"><path d="M0 3h6M3 0v6" strokeWidth="1.500" /></Svg></Tool>
          <output>{zoom}%</output>
        </ZoomBox>
      </StatusBar>
      <BottomEdge />
    </Window>
  );
};

export default App;
